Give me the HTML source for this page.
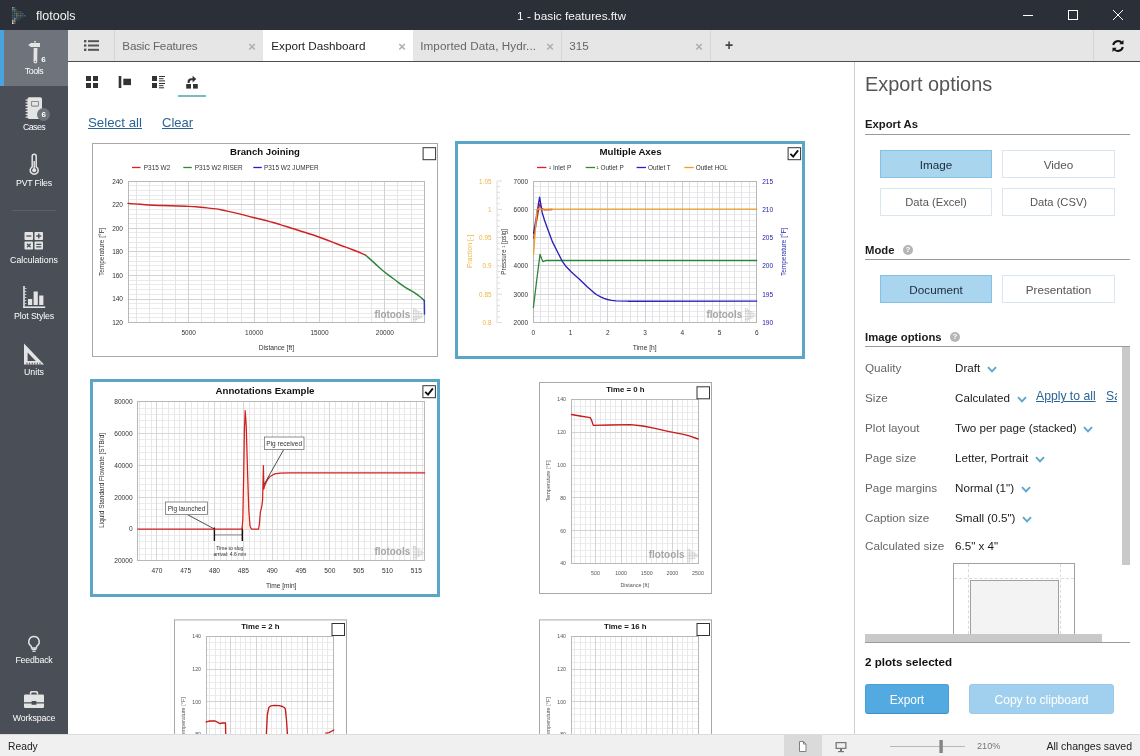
<!DOCTYPE html>
<html lang="en"><head><meta charset="utf-8"><title>flotools - basic features.ftw</title>
<style>
*{box-sizing:border-box;margin:0;padding:0}
html,body{width:1140px;height:756px;overflow:hidden;background:#fff}
body{font-family:"Liberation Sans",sans-serif;font-size:11.6px;color:#222;position:relative}
#app{position:absolute;left:0;top:0;width:1140px;height:756px;overflow:hidden;will-change:transform;background:#fff}
.abs{position:absolute}
#titlebar{position:absolute;left:0;top:0;width:1140px;height:30px;background:#2b3038;color:#f4f4f4}
#titlebar .app{position:absolute;left:36px;top:8px;font-size:12.5px;line-height:16px}
#titlebar .doc{position:absolute;left:0;width:1140px;text-align:center;top:8px;font-size:11.8px;line-height:16px;padding-left:3px}
#sidebar{position:absolute;left:0;top:30px;width:68px;height:704px;background:#494e57;color:#fff}
#sidebar .item{position:absolute;left:0;width:68px;text-align:center;font-size:8.8px;line-height:11px;color:#fff}
#sidebar .active{position:absolute;left:0;top:0;width:68px;height:56px;background:#6f737c;border-left:4px solid #4aa3df}
#tabbar{position:absolute;left:68px;top:30px;width:1072px;height:32px;background:#e6e6e6;border-bottom:1px solid #4d4d4d}
.tab{position:absolute;top:0;height:31px;width:149px;font-size:11.7px;line-height:32.2px;color:#666;padding-left:8px;border-right:1px solid #d6d6d6;white-space:nowrap}
.tab.on{background:#fff;color:#222;border-right:none}
.tab .x{position:absolute;right:7.2px;top:0.5px;font-size:13px;color:#adadad;font-weight:700;letter-spacing:0}
#status{position:absolute;left:0;top:734px;width:1140px;height:22px;background:#f0f0f0;border-top:1px solid #dcdcdc;font-size:10.3px;line-height:23px;color:#222}
#panel{position:absolute;left:854px;top:62px;width:286px;height:672px;border-left:1px solid #cfcfcf;background:#fff}
.h2{position:absolute;left:865px;font-weight:700;font-size:11.3px;color:#1a1a1a;line-height:14px;white-space:nowrap}
.hr{position:absolute;left:865px;width:265px;height:1px;background:#9a9a9a}
.btn{position:absolute;height:28px;line-height:27px;text-align:center;font-size:11.7px;border:1px solid #d9e6ef;color:#555;background:#fff}
.btn.sel{background:#a9d5ef;border-color:#85c1e4;color:#1a2a36}
.lab{position:absolute;left:865px;font-size:11.7px;color:#666;line-height:14px;white-space:nowrap}
.val{position:absolute;left:955px;font-size:11.65px;color:#1a1a1a;line-height:14px;white-space:nowrap}
.lnk{color:#2a6496;text-decoration:underline}
.help{position:absolute;width:10px;height:10px;border-radius:5px;background:#b5b5b5;color:#fff;font-size:8px;line-height:10px;text-align:center;font-weight:700}
.plot{position:absolute;background:#fff;border:1px solid #a6a6a6}
.plot.sel{border:3px solid #4b9fc9}
.cb{position:absolute;width:13px;height:13px;border:1px solid #333;background:#fff}
svg{position:absolute;left:0;top:0;overflow:visible}
svg text{font-family:"Liberation Sans",sans-serif}
</style></head>
<body>
<div id="app">
<div id="titlebar">
<svg width="30" height="30" viewBox="0 0 30 30"><rect x="12" y="7" width="1.5" height="1.5" fill="#46606a"/><rect x="14" y="7" width="1.5" height="1.5" fill="#44585c"/><rect x="12" y="9" width="1.5" height="1.5" fill="#44585c"/><rect x="14" y="9" width="1.5" height="1.5" fill="#46606a"/><rect x="16" y="9" width="1.5" height="1.5" fill="#3a4a52"/><rect x="12" y="11" width="1.5" height="1.5" fill="#44585c"/><rect x="14" y="11" width="1.5" height="1.5" fill="#4f6a70"/><rect x="16" y="11" width="1.5" height="1.5" fill="#44585c"/><rect x="18" y="11" width="1.5" height="1.5" fill="#3d5058"/><rect x="20" y="11" width="1.5" height="1.5" fill="#44585c"/><rect x="12" y="13" width="1.5" height="1.5" fill="#3d5058"/><rect x="14" y="13" width="1.5" height="1.5" fill="#4f6a70"/><rect x="16" y="13" width="1.5" height="1.5" fill="#3a4a52"/><rect x="18" y="13" width="1.5" height="1.5" fill="#44585c"/><rect x="20" y="13" width="1.5" height="1.5" fill="#46606a"/><rect x="22" y="13" width="1.5" height="1.5" fill="#46606a"/><rect x="12" y="15" width="1.5" height="1.5" fill="#4f6a70"/><rect x="14" y="15" width="1.5" height="1.5" fill="#44585c"/><rect x="16" y="15" width="1.5" height="1.5" fill="#44585c"/><rect x="18" y="15" width="1.5" height="1.5" fill="#4f6a70"/><rect x="20" y="15" width="1.5" height="1.5" fill="#4f6a70"/><rect x="22" y="15" width="1.5" height="1.5" fill="#46606a"/><rect x="24" y="15" width="1.5" height="1.5" fill="#46606a"/><rect x="12" y="17" width="1.5" height="1.5" fill="#46606a"/><rect x="14" y="17" width="1.5" height="1.5" fill="#44585c"/><rect x="16" y="17" width="1.5" height="1.5" fill="#4f6a70"/><rect x="18" y="17" width="1.5" height="1.5" fill="#3d5058"/><rect x="20" y="17" width="1.5" height="1.5" fill="#3d5058"/><rect x="12" y="19" width="1.5" height="1.5" fill="#46606a"/><rect x="14" y="19" width="1.5" height="1.5" fill="#44585c"/><rect x="16" y="19" width="1.5" height="1.5" fill="#3d5058"/><rect x="18" y="19" width="1.5" height="1.5" fill="#3a4a52"/><rect x="12" y="21" width="1.5" height="1.5" fill="#3d5058"/><rect x="14" y="21" width="1.5" height="1.5" fill="#3a4a52"/><rect x="12" y="22.6" width="1.5" height="1.5" fill="#4f6a70"/><rect x="12" y="7" width="1.5" height="1.5" fill="#8fa0a4"/><rect x="12" y="9" width="1.5" height="1.5" fill="#6f8088"/><rect x="14" y="9" width="1.5" height="1.5" fill="#5f7a80"/><rect x="16" y="13" width="1.5" height="1.5" fill="#8f7a50"/><rect x="16" y="15" width="1.5" height="1.5" fill="#7f7048"/><rect x="12" y="20.2" width="1.5" height="1.5" fill="#d8d8d8"/><rect x="14" y="20.2" width="1.5" height="1.5" fill="#9a9a9a"/><rect x="12" y="22.4" width="1.5" height="1.5" fill="#f0e8e0"/><rect x="14" y="22.4" width="1.5" height="1.5" fill="#806850"/><rect x="14" y="18" width="1.5" height="1.5" fill="#8a9a9a"/></svg>
<div class="app">flotools</div><div class="doc">1 - basic features.ftw</div>
<svg width="1140" height="30" viewBox="0 0 1140 30" fill="none" stroke="#fff" stroke-width="1"><path d="M1023 15.5h10"/><rect x="1068.5" y="10.5" width="9" height="9"/><path d="M1113 10l10 10M1123 10l-10 10"/></svg>
</div>
<div id="sidebar"><div class="active"></div>
<div class="item" style="top:35.7px;letter-spacing:-0.36px">Tools</div>
<div class="item" style="top:92.3px;letter-spacing:-0.56px">Cases</div>
<div class="item" style="top:148.0px;letter-spacing:-0.23px">PVT Files</div>
<div class="item" style="top:224.8px;letter-spacing:0px">Calculations</div>
<div class="item" style="top:281.0px;letter-spacing:-0.15px">Plot Styles</div>
<div class="item" style="top:336.8px;letter-spacing:0px">Units</div>
<div class="item" style="top:624.8px;letter-spacing:-0.19px">Feedback</div>
<div class="item" style="top:682.6px;letter-spacing:-0.15px">Workspace</div>
<div class="abs" style="left:41.2px;top:24.5px;font-size:8px;font-weight:700;color:#fff;line-height:10px">6</div>
<div class="abs" style="left:12px;top:180px;width:44px;height:1px;background:#5a5f68"></div>
<svg id="sideicons" width="68" height="704" viewBox="0 30 68 704"><g fill="#e4e4e4"><path d="M28.2 45l2.7-2.1h9.1v4.2h-9.1z"/><path d="M34.2 41.1h1.7v1.4h-1.7z"/><path d="M33.7 48h3.7l-.2 13.6q0 2-1.75 2t-1.95-2z"/></g><circle cx="35.3" cy="61.4" r="0.75" fill="#70747d"/><g><rect x="27.5" y="97.3" width="14.5" height="21.8" rx="1.8" fill="#e4e4e4"/><rect x="31.5" y="101.5" width="7" height="4.6" rx="0.6" fill="none" stroke="#8a8e96" stroke-width="1.1"/><rect x="25.5" y="99.4" width="3.2" height="1.3" rx="0.6" fill="#e4e4e4"/><rect x="25.5" y="102.25" width="3.2" height="1.3" rx="0.6" fill="#e4e4e4"/><rect x="25.5" y="105.10000000000001" width="3.2" height="1.3" rx="0.6" fill="#e4e4e4"/><rect x="25.5" y="107.95" width="3.2" height="1.3" rx="0.6" fill="#e4e4e4"/><rect x="25.5" y="110.80000000000001" width="3.2" height="1.3" rx="0.6" fill="#e4e4e4"/><rect x="25.5" y="113.65" width="3.2" height="1.3" rx="0.6" fill="#e4e4e4"/><rect x="25.5" y="116.5" width="3.2" height="1.3" rx="0.6" fill="#e4e4e4"/></g><path d="M32.2 156.2a2 2 0 0 1 4 0v10.6a4 4 0 1 1-4 0z" fill="none" stroke="#e4e4e4" stroke-width="1.5"/><circle cx="34.2" cy="170.3" r="2" fill="#e4e4e4"/><rect x="33.5" y="161" width="1.4" height="8" fill="#e4e4e4"/><g fill="#e4e4e4"><rect x="24.5" y="232" width="8.5" height="8" rx="0.8"/><rect x="34.5" y="232" width="8.5" height="8" rx="0.8"/><rect x="24.5" y="241.5" width="8.5" height="8" rx="0.8"/><rect x="34.5" y="241.5" width="8.5" height="8" rx="0.8"/></g><g stroke="#494e57" stroke-width="1.3" fill="none"><path d="M26.3 236h5"/><path d="M36.3 236h5M38.8 233.6v4.8"/><path d="M27 243.7l3.6 3.6M30.6 243.7l-3.6 3.6"/><path d="M36.3 244.4h5M36.3 246.8h5"/></g><g fill="#e4e4e4"><rect x="23.2" y="286" width="1.6" height="22"/><rect x="23.2" y="306.4" width="22" height="1.6"/><rect x="28" y="299" width="4.2" height="6"/><rect x="33.6" y="291.5" width="4.2" height="13.5"/><rect x="39.2" y="295.5" width="4.2" height="9.5"/><rect x="24.8" y="288" width="1.6" height="0.8"/><rect x="24.8" y="291" width="1.6" height="0.8"/><rect x="24.8" y="294" width="1.6" height="0.8"/><rect x="24.8" y="297" width="1.6" height="0.8"/><rect x="24.8" y="300" width="1.6" height="0.8"/><rect x="24.8" y="303" width="1.6" height="0.8"/></g><path d="M24 343.5L44 364.5H24z M27.6 352.5v8.6h8.2z" fill="#e4e4e4" fill-rule="evenodd"/><g fill="#494e57"><rect x="26.5" y="362.6" width="1" height="1.9"/><rect x="29.1" y="362.6" width="1" height="1.9"/><rect x="31.7" y="362.6" width="1" height="1.9"/><rect x="34.3" y="362.6" width="1" height="1.9"/><rect x="36.9" y="362.6" width="1" height="1.9"/><rect x="39.5" y="362.6" width="1" height="1.9"/></g><path d="M34 636.5a5.2 5.2 0 0 1 3.2 9.3q-.8.8-.8 2.2h-4.8q0-1.4-.8-2.2a5.2 5.2 0 0 1 3.2-9.3z" fill="none" stroke="#e4e4e4" stroke-width="1.5"/><rect x="31.6" y="648.6" width="4.8" height="1.4" fill="#e4e4e4"/><rect x="32.4" y="650.6" width="3.2" height="1.3" fill="#e4e4e4"/><g fill="#e4e4e4"><path d="M29.8 694.5v-1.8q0-1.8 1.8-1.8h4.8q1.8 0 1.8 1.8v1.8h-1.6v-1.4q0-.6-.6-.6h-4q-.6 0-.6.6v1.4z"/><path d="M24 695.8q0-1.3 1.3-1.3h17.4q1.3 0 1.3 1.3v6.4h-7.6v-1.2h-4.8v1.2H24z"/><path d="M24 703.4h7.6v1.4h4.8v-1.4H44v3.4q0 1.2-1.2 1.2H25.2q-1.2 0-1.2-1.2z"/></g></svg>
<div class="abs" style="left:37.3px;top:77.9px;width:13px;height:13px;border-radius:7px;background:#6e727a;font-size:8px;font-weight:700;color:#fff;line-height:13px;text-align:center">6</div>
</div>
<div id="tabbar">
<div class="tab" style="left:0;width:47px"></div>
<svg width="46" height="31" viewBox="0 0 46 31" fill="#555"><rect x="16" y="10" width="2.4" height="2.4"/><rect x="20" y="10.2" width="11" height="2"/><rect x="16" y="14.3" width="2.4" height="2.4"/><rect x="20" y="14.5" width="11" height="2"/><rect x="16" y="18.6" width="2.4" height="2.4"/><rect x="20" y="18.8" width="11" height="2"/></svg>
<div class="tab" style="left:47px;letter-spacing:-0.2px;padding-left:7.3px">Basic Features<span class="x">×</span></div>
<div class="tab on" style="left:195px;width:150px;padding-left:8.3px">Export Dashboard<span class="x">×</span></div>
<div class="tab" style="left:345px;padding-left:7.2px;letter-spacing:0.07px">Imported Data, Hydr...<span class="x">×</span></div>
<div class="tab" style="left:494px;padding-left:7.2px">315<span class="x">×</span></div>
<div class="abs" style="left:657px;top:0;line-height:31px;font-size:14px;font-weight:700;color:#444">+</div>
<div class="abs" style="left:1025px;top:0;width:1px;height:31px;background:#d6d6d6"></div>
<svg class="abs" style="left:1043px;top:9px" width="14" height="14" viewBox="0 0 14 14" fill="none" stroke="#111" stroke-width="2"><path d="M2.2 6A5 5 0 0 1 11 4"/><path d="M11.8 8A5 5 0 0 1 3 10"/><path d="M12.5 1v4.2h-4.2z" fill="#111" stroke="none"/><path d="M1.5 13v-4.2h4.2z" fill="#111" stroke="none"/></svg>
</div>
<svg width="1140" height="756" viewBox="0 0 1140 756" style="pointer-events:none" id="toolbar">
<g fill="#333"><rect x="86" y="76" width="5" height="5"/><rect x="93" y="76" width="5" height="5"/><rect x="86" y="83" width="5" height="5"/><rect x="93" y="83" width="5" height="5"/>
<rect x="118.7" y="76" width="2.6" height="12"/><rect x="123.3" y="78.7" width="7.7" height="6.4"/>
<rect x="152" y="76" width="5" height="5"/><rect x="152" y="83" width="5" height="5"/><rect x="159" y="76" width="6" height="1"/><rect x="159" y="78.2" width="4.5" height="1"/><rect x="159" y="80.4" width="6" height="1"/><rect x="159" y="83" width="6" height="1"/><rect x="159" y="85.2" width="4.5" height="1"/><rect x="159" y="87.3" width="5" height="1"/>
<rect x="186.2" y="84" width="4.8" height="4.6"/><rect x="193" y="84" width="4.8" height="4.6"/><path d="M187.6 83v-1.3q0-3.5 3.8-3.5h1.2v-2.5l3.7 3.4-3.7 3.4v-2.3h-1.1q-1.8 0-1.8 1.8v1z"/></g>
<rect x="178" y="95" width="28" height="2" fill="#78b9ca"/>
</svg>
<div class="abs lnk" style="left:88px;top:114.6px;font-size:13.3px;line-height:16px">Select all</div>
<div class="abs lnk" style="left:162px;top:114.6px;font-size:13px;line-height:16px">Clear</div>
<svg width="1140" height="734" viewBox="0 0 1140 734" style="overflow:hidden">
<rect x="92.5" y="143.5" width="345" height="213" fill="#fff" stroke="#a8a8a8" stroke-width="1"/>
<path d="M128 322.5H424.7M128 317.5H424.7M128 313.5H424.7M128 308.5H424.7M128 303.5H424.7M128 299.5H424.7M128 294.5H424.7M128 289.5H424.7M128 284.5H424.7M128 280.5H424.7M128 275.5H424.7M128 270.5H424.7M128 265.5H424.7M128 261.5H424.7M128 256.5H424.7M128 251.5H424.7M128 247.5H424.7M128 242.5H424.7M128 237.5H424.7M128 232.5H424.7M128 228.5H424.7M128 223.5H424.7M128 218.5H424.7M128 214.5H424.7M128 209.5H424.7M128 204.5H424.7M128 199.5H424.7M128 195.5H424.7M128 190.5H424.7M128 185.5H424.7M128 181.5H424.7" stroke="#eaeaea" stroke-width="1" fill="none"/><path d="M136.5 181V322.6M149.5 181V322.6M162.5 181V322.6M175.5 181V322.6M188.5 181V322.6M201.5 181V322.6M214.5 181V322.6M227.5 181V322.6M241.5 181V322.6M254.5 181V322.6M267.5 181V322.6M280.5 181V322.6M293.5 181V322.6M306.5 181V322.6M319.5 181V322.6M332.5 181V322.6M345.5 181V322.6M358.5 181V322.6M371.5 181V322.6M384.5 181V322.6M397.5 181V322.6M411.5 181V322.6M424.5 181V322.6" stroke="#e4e4e4" stroke-width="1" fill="none"/><path d="M188.5 181V322.6M254.5 181V322.6M319.5 181V322.6M384.5 181V322.6M128 322.5H424.7M128 299.5H424.7M128 275.5H424.7M128 251.5H424.7M128 228.5H424.7M128 204.5H424.7M128 181.5H424.7" stroke="#d2d2d2" stroke-width="1" fill="none"/><rect x="128.5" y="181.5" width="296" height="141" fill="none" stroke="#b8b8b8" stroke-width="1"/>
<text x="265" y="155.3" font-size="9.6" text-anchor="middle" fill="#111" font-weight="700">Branch Joining</text>
<path d="M132 167.5h8.5" stroke="#e02020" stroke-width="1.3"/>
<text x="143.8" y="169.7" font-size="6.45" text-anchor="start" fill="#333">P315 W2</text>
<path d="M183.3 167.5h8.5" stroke="#2e8b2e" stroke-width="1.3"/>
<text x="194.7" y="169.7" font-size="6.45" text-anchor="start" fill="#333">P315 W2 RISER</text>
<path d="M253.3 167.5h8.5" stroke="#2222c8" stroke-width="1.3"/>
<text x="264" y="169.7" font-size="6.45" text-anchor="start" fill="#333">P315 W2 JUMPER</text>
<text x="123" y="324.8" font-size="6.5" text-anchor="end" fill="#333">120</text>
<text x="123" y="301.32" font-size="6.5" text-anchor="end" fill="#333">140</text>
<text x="123" y="277.83" font-size="6.5" text-anchor="end" fill="#333">160</text>
<text x="123" y="254.35" font-size="6.5" text-anchor="end" fill="#333">180</text>
<text x="123" y="230.87" font-size="6.5" text-anchor="end" fill="#333">200</text>
<text x="123" y="207.38" font-size="6.5" text-anchor="end" fill="#333">220</text>
<text x="123" y="183.9" font-size="6.5" text-anchor="end" fill="#333">240</text>
<text x="188.7" y="335.2" font-size="6.5" text-anchor="middle" fill="#333">5000</text>
<text x="254.1" y="335.2" font-size="6.5" text-anchor="middle" fill="#333">10000</text>
<text x="319.5" y="335.2" font-size="6.5" text-anchor="middle" fill="#333">15000</text>
<text x="384.9" y="335.2" font-size="6.5" text-anchor="middle" fill="#333">20000</text>
<text x="276.4" y="350.4" font-size="6.7" text-anchor="middle" fill="#333">Distance [ft]</text>
<text x="104.2" y="251.8" font-size="6.5" text-anchor="middle" fill="#333" transform="rotate(-90 104.2 251.8)">Temperature [°F]</text>
<path d="M128 203.4C132 203.7 131.43 203.7 140 204.3C148.57 204.9 143.7 204.7 153.7 205.2C163.7 205.7 158.33 205.4 170 205.8C181.67 206.2 175.7 205.63 188.7 206.4C201.7 207.17 196.1 206.53 209 208.1C221.9 209.67 212.3 207.9 227.4 211.1C242.5 214.3 239.57 214.03 254.3 217.7C269.03 221.37 260.93 219.17 271.6 222.1C282.27 225.03 276.47 223.43 286.3 226.5C296.13 229.57 290.03 227.73 301.1 231.3C312.17 234.87 307.23 232.9 319.5 237.2C331.77 241.5 326.83 240 337.9 244.2C348.97 248.4 343.6 246.27 352.7 249.8C361.8 253.33 361.03 253.13 365.2 254.8" fill="none" stroke="#d02020" stroke-width="1.45" stroke-linejoin="round" stroke-linecap="round"/>
<path d="M365.6 255.3C368.4 257.73 368.5 257.7 374 262.6C379.5 267.5 375.7 264.7 382.1 270C388.5 275.3 385.83 272.97 393.2 278.5C400.57 284.03 397.43 282.07 404.2 286.6C410.97 291.13 408.57 288.97 413.5 292.1C418.43 295.23 415.33 293.17 419 296C422.67 298.83 422.67 299.07 424.5 300.6" fill="none" stroke="#2e8438" stroke-width="1.45" stroke-linejoin="round" stroke-linecap="round"/>
<path d="M424.3 300.5 L424.5 314" fill="none" stroke="#3535b8" stroke-width="1.45" stroke-linejoin="round" stroke-linecap="round"/>
<text x="374.4" y="317.6" font-size="11.2" font-weight="700" fill="#a6a6a6" textLength="35.8" lengthAdjust="spacingAndGlyphs">flotools</text><path d="M413 308.25h1.1v1.1h-1.1zM414.6 308.25h1.1v1.1h-1.1zM413 309.8h1.1v1.1h-1.1zM414.6 309.8h1.1v1.1h-1.1zM416.2 309.8h1.1v1.1h-1.1zM413 311.35h1.1v1.1h-1.1zM414.6 311.35h1.1v1.1h-1.1zM416.2 311.35h1.1v1.1h-1.1zM417.8 311.35h1.1v1.1h-1.1zM419.4 311.35h1.1v1.1h-1.1zM413 312.9h1.1v1.1h-1.1zM414.6 312.9h1.1v1.1h-1.1zM416.2 312.9h1.1v1.1h-1.1zM417.8 312.9h1.1v1.1h-1.1zM419.4 312.9h1.1v1.1h-1.1zM421 312.9h1.1v1.1h-1.1zM413 314.45h1.1v1.1h-1.1zM414.6 314.45h1.1v1.1h-1.1zM416.2 314.45h1.1v1.1h-1.1zM417.8 314.45h1.1v1.1h-1.1zM419.4 314.45h1.1v1.1h-1.1zM421 314.45h1.1v1.1h-1.1zM422.6 314.45h1.1v1.1h-1.1zM413 316h1.1v1.1h-1.1zM414.6 316h1.1v1.1h-1.1zM416.2 316h1.1v1.1h-1.1zM417.8 316h1.1v1.1h-1.1zM419.4 316h1.1v1.1h-1.1zM421 316h1.1v1.1h-1.1zM413 317.55h1.1v1.1h-1.1zM414.6 317.55h1.1v1.1h-1.1zM416.2 317.55h1.1v1.1h-1.1zM417.8 317.55h1.1v1.1h-1.1zM419.4 317.55h1.1v1.1h-1.1zM413 319.1h1.1v1.1h-1.1zM414.6 319.1h1.1v1.1h-1.1zM416.2 319.1h1.1v1.1h-1.1zM413 320.65h1.1v1.1h-1.1zM414.6 320.65h1.1v1.1h-1.1z" fill="#c6c6c6"/>
<rect x="423.1" y="147.7" width="12.5" height="12" fill="#fff" stroke="#333" stroke-width="1"/>
<rect x="456.5" y="142.5" width="347" height="215" fill="#fff" stroke="#5aa6c9" stroke-width="3"/>
<path d="M533.4 322.5H756.7M533.4 316.5H756.7M533.4 311.5H756.7M533.4 305.5H756.7M533.4 299.5H756.7M533.4 294.5H756.7M533.4 288.5H756.7M533.4 282.5H756.7M533.4 277.5H756.7M533.4 271.5H756.7M533.4 265.5H756.7M533.4 260.5H756.7M533.4 254.5H756.7M533.4 248.5H756.7M533.4 243.5H756.7M533.4 237.5H756.7M533.4 231.5H756.7M533.4 226.5H756.7M533.4 220.5H756.7M533.4 214.5H756.7M533.4 209.5H756.7M533.4 203.5H756.7M533.4 197.5H756.7M533.4 192.5H756.7M533.4 186.5H756.7M533.4 181.5H756.7" stroke="#eaeaed" stroke-width="1" fill="none"/><path d="M540.5 181V322.6M548.5 181V322.6M555.5 181V322.6M563.5 181V322.6M570.5 181V322.6M578.5 181V322.6M585.5 181V322.6M592.5 181V322.6M600.5 181V322.6M607.5 181V322.6M615.5 181V322.6M622.5 181V322.6M630.5 181V322.6M637.5 181V322.6M645.5 181V322.6M652.5 181V322.6M659.5 181V322.6M667.5 181V322.6M674.5 181V322.6M682.5 181V322.6M689.5 181V322.6M697.5 181V322.6M704.5 181V322.6M712.5 181V322.6M719.5 181V322.6M726.5 181V322.6M734.5 181V322.6M741.5 181V322.6M749.5 181V322.6" stroke="#e3e3e7" stroke-width="1" fill="none"/><path d="M570.5 181V322.6M607.5 181V322.6M645.5 181V322.6M682.5 181V322.6M719.5 181V322.6M533.4 322.5H756.7M533.4 294.5H756.7M533.4 265.5H756.7M533.4 237.5H756.7M533.4 209.5H756.7M533.4 181.5H756.7" stroke="#d0d0d5" stroke-width="1" fill="none"/><rect x="533.5" y="181.5" width="223" height="141" fill="none" stroke="#b8b8b8" stroke-width="1"/>
<text x="630.5" y="155.2" font-size="9.7" text-anchor="middle" fill="#111" font-weight="700">Multiple Axes</text>
<path d="M537 167.5h9.4" stroke="#e02020" stroke-width="1.3"/>
<text x="549" y="169.7" font-size="6.45" text-anchor="start" fill="#333">¹ Inlet P</text>
<path d="M585.7 167.5h9.4" stroke="#2e8b2e" stroke-width="1.3"/>
<text x="596.5" y="169.7" font-size="6.45" text-anchor="start" fill="#333">¹ Outlet P</text>
<path d="M636.6 167.5h9.4" stroke="#2222c8" stroke-width="1.3"/>
<text x="648" y="169.7" font-size="6.45" text-anchor="start" fill="#333">Outlet T</text>
<path d="M684.3 167.5h9.4" stroke="#f0a020" stroke-width="1.3"/>
<text x="695.7" y="169.7" font-size="6.45" text-anchor="start" fill="#333">Outlet HOL</text>
<path d="M497 181V322.6M497 181h5M497 186.66h3M497 192.33h3M497 197.99h3M497 203.66h3M497 209.32h5M497 214.98h3M497 220.65h3M497 226.31h3M497 231.98h3M497 237.64h5M497 243.3h3M497 248.97h3M497 254.63h3M497 260.3h3M497 265.96h5M497 271.62h3M497 277.29h3M497 282.95h3M497 288.62h3M497 294.28h5M497 299.94h3M497 305.61h3M497 311.27h3M497 316.94h3M497 322.6h5" stroke="#dcdcdc" stroke-width="1" fill="none"/>
<text x="491.5" y="183.9" font-size="6.4" text-anchor="end" fill="#efb345">1.05</text>
<text x="491.5" y="212.08" font-size="6.4" text-anchor="end" fill="#efb345">1</text>
<text x="491.5" y="240.26" font-size="6.4" text-anchor="end" fill="#efb345">0.95</text>
<text x="491.5" y="268.44" font-size="6.4" text-anchor="end" fill="#efb345">0.9</text>
<text x="491.5" y="296.62" font-size="6.4" text-anchor="end" fill="#efb345">0.85</text>
<text x="491.5" y="324.8" font-size="6.4" text-anchor="end" fill="#efb345">0.8</text>
<text x="528" y="183.9" font-size="6.5" text-anchor="end" fill="#333">7000</text>
<text x="528" y="212.08" font-size="6.5" text-anchor="end" fill="#333">6000</text>
<text x="528" y="240.26" font-size="6.5" text-anchor="end" fill="#333">5000</text>
<text x="528" y="268.44" font-size="6.5" text-anchor="end" fill="#333">4000</text>
<text x="528" y="296.62" font-size="6.5" text-anchor="end" fill="#333">3000</text>
<text x="528" y="324.8" font-size="6.5" text-anchor="end" fill="#333">2000</text>
<text x="762.2" y="183.9" font-size="6.5" text-anchor="start" fill="#2222a8">215</text>
<text x="762.2" y="212.08" font-size="6.5" text-anchor="start" fill="#2222a8">210</text>
<text x="762.2" y="240.26" font-size="6.5" text-anchor="start" fill="#2222a8">205</text>
<text x="762.2" y="268.44" font-size="6.5" text-anchor="start" fill="#2222a8">200</text>
<text x="762.2" y="296.62" font-size="6.5" text-anchor="start" fill="#2222a8">195</text>
<text x="762.2" y="324.8" font-size="6.5" text-anchor="start" fill="#2222a8">190</text>
<text x="533.4" y="335.2" font-size="6.5" text-anchor="middle" fill="#333">0</text>
<text x="570.62" y="335.2" font-size="6.5" text-anchor="middle" fill="#333">1</text>
<text x="607.84" y="335.2" font-size="6.5" text-anchor="middle" fill="#333">2</text>
<text x="645.06" y="335.2" font-size="6.5" text-anchor="middle" fill="#333">3</text>
<text x="682.28" y="335.2" font-size="6.5" text-anchor="middle" fill="#333">4</text>
<text x="719.5" y="335.2" font-size="6.5" text-anchor="middle" fill="#333">5</text>
<text x="756.72" y="335.2" font-size="6.5" text-anchor="middle" fill="#333">6</text>
<text x="644.7" y="350.4" font-size="6.7" text-anchor="middle" fill="#333">Time [h]</text>
<text x="471.7" y="251.4" font-size="6.9" text-anchor="middle" fill="#efb345" transform="rotate(-90 471.7 251.4)">Fraction [-]</text>
<text x="506.2" y="251.8" font-size="6.3" text-anchor="middle" fill="#333" transform="rotate(-90 506.2 251.8)">Pressure ¹ [psig]</text>
<text x="786" y="251.8" font-size="6.5" text-anchor="middle" fill="#2222a8" transform="rotate(-90 786 251.8)">Temperature [°F]</text>
<path d="M533.4 307.5 L536.5 282 L540 254.3 L541.5 258.5 L543 261.7 L544.8 260.9 L546.5 260.5 L756.7 260.5" fill="none" stroke="#2e8438" stroke-width="1.3" stroke-linejoin="round" stroke-linecap="round"/>
<path d="M533.6 238 L536.5 222 L539.6 204 L541.5 208 L544 209.8 L552 209.5" fill="none" stroke="#d42020" stroke-width="1.3" stroke-linejoin="round" stroke-linecap="round"/>
<path d="M533.6 233.3 L536.5 216 L539.6 197.2 L540.8 204 L542.2 212.7 L544.6 220.5 L547.3 228.1 L552.5 241.9 L557.7 252.2 L562 260.8 L566.3 266.8 L571.4 272 L575.5 275.8 L580 279.7 L586.9 286.6 L593.8 292.6 L597.2 295 L600.6 296.9 L604 298.4 L607.5 299.5 L611.5 300.4 L616.1 300.9 L628.1 301.2 L756.7 301.1" fill="none" stroke="#2a22b4" stroke-width="1.35" stroke-linejoin="round" stroke-linecap="round"/>
<path d="M533.6 254 L535.2 232 L537 209.2 L756.7 209.2" fill="none" stroke="#eca02a" stroke-width="1.3" stroke-linejoin="round" stroke-linecap="round"/>
<text x="706.4" y="317.6" font-size="11.2" font-weight="700" fill="#a6a6a6" textLength="35.8" lengthAdjust="spacingAndGlyphs">flotools</text><path d="M745 308.25h1.1v1.1h-1.1zM746.6 308.25h1.1v1.1h-1.1zM745 309.8h1.1v1.1h-1.1zM746.6 309.8h1.1v1.1h-1.1zM748.2 309.8h1.1v1.1h-1.1zM745 311.35h1.1v1.1h-1.1zM746.6 311.35h1.1v1.1h-1.1zM748.2 311.35h1.1v1.1h-1.1zM749.8 311.35h1.1v1.1h-1.1zM751.4 311.35h1.1v1.1h-1.1zM745 312.9h1.1v1.1h-1.1zM746.6 312.9h1.1v1.1h-1.1zM748.2 312.9h1.1v1.1h-1.1zM749.8 312.9h1.1v1.1h-1.1zM751.4 312.9h1.1v1.1h-1.1zM753 312.9h1.1v1.1h-1.1zM745 314.45h1.1v1.1h-1.1zM746.6 314.45h1.1v1.1h-1.1zM748.2 314.45h1.1v1.1h-1.1zM749.8 314.45h1.1v1.1h-1.1zM751.4 314.45h1.1v1.1h-1.1zM753 314.45h1.1v1.1h-1.1zM754.6 314.45h1.1v1.1h-1.1zM745 316h1.1v1.1h-1.1zM746.6 316h1.1v1.1h-1.1zM748.2 316h1.1v1.1h-1.1zM749.8 316h1.1v1.1h-1.1zM751.4 316h1.1v1.1h-1.1zM753 316h1.1v1.1h-1.1zM745 317.55h1.1v1.1h-1.1zM746.6 317.55h1.1v1.1h-1.1zM748.2 317.55h1.1v1.1h-1.1zM749.8 317.55h1.1v1.1h-1.1zM751.4 317.55h1.1v1.1h-1.1zM745 319.1h1.1v1.1h-1.1zM746.6 319.1h1.1v1.1h-1.1zM748.2 319.1h1.1v1.1h-1.1zM745 320.65h1.1v1.1h-1.1zM746.6 320.65h1.1v1.1h-1.1z" fill="#c6c6c6"/>
<rect x="788.1" y="147.7" width="12.5" height="12" fill="#fff" stroke="#333" stroke-width="1"/><path d="M790.4 153.8l2.8 2.8 4.9-6.2" fill="none" stroke="#111" stroke-width="1.9"/>
<rect x="91.5" y="380.5" width="347" height="215" fill="#fff" stroke="#5aa6c9" stroke-width="3"/>
<path d="M137.8 554.5H424.7M137.8 548.5H424.7M137.8 541.5H424.7M137.8 535.5H424.7M137.8 529.5H424.7M137.8 522.5H424.7M137.8 516.5H424.7M137.8 509.5H424.7M137.8 503.5H424.7M137.8 497.5H424.7M137.8 490.5H424.7M137.8 484.5H424.7M137.8 478.5H424.7M137.8 471.5H424.7M137.8 465.5H424.7M137.8 459.5H424.7M137.8 452.5H424.7M137.8 446.5H424.7M137.8 439.5H424.7M137.8 433.5H424.7M137.8 427.5H424.7M137.8 420.5H424.7M137.8 414.5H424.7M137.8 408.5H424.7M137.8 401.5H424.7" stroke="#ececec" stroke-width="1" fill="none"/><path d="M139.5 401.5V560.5M145.5 401.5V560.5M151.5 401.5V560.5M156.5 401.5V560.5M162.5 401.5V560.5M168.5 401.5V560.5M174.5 401.5V560.5M179.5 401.5V560.5M185.5 401.5V560.5M191.5 401.5V560.5M197.5 401.5V560.5M203.5 401.5V560.5M208.5 401.5V560.5M214.5 401.5V560.5M220.5 401.5V560.5M226.5 401.5V560.5M231.5 401.5V560.5M237.5 401.5V560.5M243.5 401.5V560.5M249.5 401.5V560.5M254.5 401.5V560.5M260.5 401.5V560.5M266.5 401.5V560.5M272.5 401.5V560.5M277.5 401.5V560.5M283.5 401.5V560.5M289.5 401.5V560.5M295.5 401.5V560.5M301.5 401.5V560.5M306.5 401.5V560.5M312.5 401.5V560.5M318.5 401.5V560.5M324.5 401.5V560.5M329.5 401.5V560.5M335.5 401.5V560.5M341.5 401.5V560.5M347.5 401.5V560.5M352.5 401.5V560.5M358.5 401.5V560.5M364.5 401.5V560.5M370.5 401.5V560.5M375.5 401.5V560.5M381.5 401.5V560.5M387.5 401.5V560.5M393.5 401.5V560.5M399.5 401.5V560.5M404.5 401.5V560.5M410.5 401.5V560.5M416.5 401.5V560.5M422.5 401.5V560.5" stroke="#e8e8e8" stroke-width="1" fill="none"/><path d="M156.5 401.5V560.5M185.5 401.5V560.5M214.5 401.5V560.5M243.5 401.5V560.5M272.5 401.5V560.5M301.5 401.5V560.5M329.5 401.5V560.5M358.5 401.5V560.5M387.5 401.5V560.5M416.5 401.5V560.5M137.8 529.5H424.7M137.8 497.5H424.7M137.8 465.5H424.7M137.8 433.5H424.7M137.8 401.5H424.7" stroke="#d8d8d8" stroke-width="1" fill="none"/><rect x="137.5" y="401.5" width="287" height="159" fill="none" stroke="#b8b8b8" stroke-width="1"/>
<text x="265" y="393.7" font-size="9.7" text-anchor="middle" fill="#111" font-weight="700">Annotations Example</text>
<text x="132.6" y="563.1" font-size="6.6" text-anchor="end" fill="#333">20000</text>
<text x="132.6" y="531.3" font-size="6.6" text-anchor="end" fill="#333">0</text>
<text x="132.6" y="499.5" font-size="6.6" text-anchor="end" fill="#333">20000</text>
<text x="132.6" y="467.7" font-size="6.6" text-anchor="end" fill="#333">40000</text>
<text x="132.6" y="435.9" font-size="6.6" text-anchor="end" fill="#333">60000</text>
<text x="132.6" y="404.1" font-size="6.6" text-anchor="end" fill="#333">80000</text>
<text x="156.9" y="573.2" font-size="6.6" text-anchor="middle" fill="#333">470</text>
<text x="185.72" y="573.2" font-size="6.6" text-anchor="middle" fill="#333">475</text>
<text x="214.55" y="573.2" font-size="6.6" text-anchor="middle" fill="#333">480</text>
<text x="243.38" y="573.2" font-size="6.6" text-anchor="middle" fill="#333">485</text>
<text x="272.2" y="573.2" font-size="6.6" text-anchor="middle" fill="#333">490</text>
<text x="301.02" y="573.2" font-size="6.6" text-anchor="middle" fill="#333">495</text>
<text x="329.85" y="573.2" font-size="6.6" text-anchor="middle" fill="#333">500</text>
<text x="358.67" y="573.2" font-size="6.6" text-anchor="middle" fill="#333">505</text>
<text x="387.5" y="573.2" font-size="6.6" text-anchor="middle" fill="#333">510</text>
<text x="416.33" y="573.2" font-size="6.6" text-anchor="middle" fill="#333">515</text>
<text x="281.2" y="587.5" font-size="6.6" text-anchor="middle" fill="#333">Time [min]</text>
<text x="104.2" y="480.4" font-size="6.45" text-anchor="middle" fill="#333" transform="rotate(-90 104.2 480.4)">Liquid Standard Flowrate [STB/d]</text>
<path d="M214.4 534.9H242.3" stroke="#888" stroke-width="1"/>
<path d="M214.4 527.4V541M242.3 527.4V541" stroke="#111" stroke-width="1.4"/>
<text x="229.8" y="549.6" font-size="5.0" text-anchor="middle" fill="#333">Time to slug</text>
<text x="229.8" y="555.8" font-size="5.0" text-anchor="middle" fill="#333">arrival: 4.6 min</text>
<path d="M242.6 529L243.6 480 244.4 430 245.2 410.6 246.2 425 247.5 470 248.8 510 250 526 251.4 529z" fill="#fdeee5"/>
<path d="M137.8 529 L242 529 L242.8 520 L243.6 480 L244.4 430 L245.2 410.6 L246.2 425 L247.5 470 L248.8 510 L250 526 L251.4 529 L258.6 529 L259.4 524 L260.4 512 L261.8 506.3 L262.6 500 L263.4 465.7 L263.9 489 L264.4 486.5 L266 482.5 L268 479 L270.5 476.2 L274.7 473.9 L280 473.1 L290 472.9 L424.7 472.9" fill="none" stroke="#d22020" stroke-width="1.25" stroke-linejoin="round" stroke-linecap="round"/>
<path d="M187 514.4L214.4 529M283.7 449.6L264.3 484" stroke="#222" stroke-width="0.8" fill="none"/>
<rect x="165.5" y="502" width="42" height="12.6" fill="#fff" stroke="#777" stroke-width="0.8"/>
<text x="186.5" y="510.8" font-size="6.5" text-anchor="middle" fill="#333">Pig launched</text>
<rect x="264.5" y="437" width="39.5" height="12.5" fill="#fff" stroke="#777" stroke-width="0.8"/>
<text x="284.2" y="445.8" font-size="6.5" text-anchor="middle" fill="#333">Pig received</text>
<text x="374.4" y="555.4" font-size="11.2" font-weight="700" fill="#a6a6a6" textLength="35.8" lengthAdjust="spacingAndGlyphs">flotools</text><path d="M413 546.05h1.1v1.1h-1.1zM414.6 546.05h1.1v1.1h-1.1zM413 547.6h1.1v1.1h-1.1zM414.6 547.6h1.1v1.1h-1.1zM416.2 547.6h1.1v1.1h-1.1zM413 549.15h1.1v1.1h-1.1zM414.6 549.15h1.1v1.1h-1.1zM416.2 549.15h1.1v1.1h-1.1zM417.8 549.15h1.1v1.1h-1.1zM419.4 549.15h1.1v1.1h-1.1zM413 550.7h1.1v1.1h-1.1zM414.6 550.7h1.1v1.1h-1.1zM416.2 550.7h1.1v1.1h-1.1zM417.8 550.7h1.1v1.1h-1.1zM419.4 550.7h1.1v1.1h-1.1zM421 550.7h1.1v1.1h-1.1zM413 552.25h1.1v1.1h-1.1zM414.6 552.25h1.1v1.1h-1.1zM416.2 552.25h1.1v1.1h-1.1zM417.8 552.25h1.1v1.1h-1.1zM419.4 552.25h1.1v1.1h-1.1zM421 552.25h1.1v1.1h-1.1zM422.6 552.25h1.1v1.1h-1.1zM413 553.8h1.1v1.1h-1.1zM414.6 553.8h1.1v1.1h-1.1zM416.2 553.8h1.1v1.1h-1.1zM417.8 553.8h1.1v1.1h-1.1zM419.4 553.8h1.1v1.1h-1.1zM421 553.8h1.1v1.1h-1.1zM413 555.35h1.1v1.1h-1.1zM414.6 555.35h1.1v1.1h-1.1zM416.2 555.35h1.1v1.1h-1.1zM417.8 555.35h1.1v1.1h-1.1zM419.4 555.35h1.1v1.1h-1.1zM413 556.9h1.1v1.1h-1.1zM414.6 556.9h1.1v1.1h-1.1zM416.2 556.9h1.1v1.1h-1.1zM413 558.45h1.1v1.1h-1.1zM414.6 558.45h1.1v1.1h-1.1z" fill="#c6c6c6"/>
<rect x="422.9" y="385.7" width="12.5" height="12" fill="#fff" stroke="#333" stroke-width="1"/><path d="M425.2 391.8l2.8 2.8 4.9-6.2" fill="none" stroke="#111" stroke-width="1.9"/>
<rect x="539.5" y="382.5" width="172" height="211" fill="#fff" stroke="#a8a8a8" stroke-width="1"/><path d="M571.4 563.5H698.1M571.4 556.5H698.1M571.4 550.5H698.1M571.4 543.5H698.1M571.4 537.5H698.1M571.4 530.5H698.1M571.4 524.5H698.1M571.4 517.5H698.1M571.4 511.5H698.1M571.4 504.5H698.1M571.4 497.5H698.1M571.4 491.5H698.1M571.4 484.5H698.1M571.4 478.5H698.1M571.4 471.5H698.1M571.4 465.5H698.1M571.4 458.5H698.1M571.4 451.5H698.1M571.4 445.5H698.1M571.4 438.5H698.1M571.4 432.5H698.1M571.4 425.5H698.1M571.4 419.5H698.1M571.4 412.5H698.1M571.4 406.5H698.1M571.4 399.5H698.1" stroke="#ececec" stroke-width="1" fill="none"/><path d="M574.5 399.5V563.5M580.5 399.5V563.5M585.5 399.5V563.5M590.5 399.5V563.5M595.5 399.5V563.5M600.5 399.5V563.5M605.5 399.5V563.5M610.5 399.5V563.5M615.5 399.5V563.5M621.5 399.5V563.5M626.5 399.5V563.5M631.5 399.5V563.5M636.5 399.5V563.5M641.5 399.5V563.5M646.5 399.5V563.5M651.5 399.5V563.5M656.5 399.5V563.5M662.5 399.5V563.5M667.5 399.5V563.5M672.5 399.5V563.5M677.5 399.5V563.5M682.5 399.5V563.5M687.5 399.5V563.5M692.5 399.5V563.5" stroke="#e9e9e9" stroke-width="1" fill="none"/><path d="M595.5 399.5V563.5M621.5 399.5V563.5M646.5 399.5V563.5M672.5 399.5V563.5M698.5 399.5V563.5M571.4 563.5H698.1M571.4 530.5H698.1M571.4 497.5H698.1M571.4 465.5H698.1M571.4 432.5H698.1M571.4 399.5H698.1" stroke="#d4d4d4" stroke-width="1" fill="none"/><rect x="571.5" y="399.5" width="127" height="164" fill="none" stroke="#b8b8b8" stroke-width="1"/><text x="625.3" y="392.4" font-size="7.8" text-anchor="middle" fill="#111" font-weight="700">Time = 0 h</text><text x="566" y="565.3" font-size="5.2" text-anchor="end" fill="#555">40</text><text x="566" y="532.5" font-size="5.2" text-anchor="end" fill="#555">60</text><text x="566" y="499.7" font-size="5.2" text-anchor="end" fill="#555">80</text><text x="566" y="466.9" font-size="5.2" text-anchor="end" fill="#555">100</text><text x="566" y="434.1" font-size="5.2" text-anchor="end" fill="#555">120</text><text x="566" y="401.3" font-size="5.2" text-anchor="end" fill="#555">140</text><text x="595.44" y="574.9" font-size="5.3" text-anchor="middle" fill="#555">500</text><text x="621.08" y="574.9" font-size="5.3" text-anchor="middle" fill="#555">1000</text><text x="646.72" y="574.9" font-size="5.3" text-anchor="middle" fill="#555">1500</text><text x="672.36" y="574.9" font-size="5.3" text-anchor="middle" fill="#555">2000</text><text x="698" y="574.9" font-size="5.3" text-anchor="middle" fill="#555">2500</text><text x="634.7" y="587.4" font-size="5.4" text-anchor="middle" fill="#555">Distance [ft]</text><text x="550" y="481" font-size="5.5" text-anchor="middle" fill="#555" transform="rotate(-90 550 481)">Temperature [°F]</text><path d="M571.5 414.5 L580 416 L590.2 417.6 L591.5 420 L593.3 425.4 L610 425 L630.6 424.7 L643 426 L655 428.4 L668 431.3 L683.5 434.4 L690 436.2 L698.1 439" fill="none" stroke="#c81a1a" stroke-width="1.35" stroke-linejoin="round" stroke-linecap="round"/><text x="648.7" y="558" font-size="11.2" font-weight="700" fill="#a6a6a6" textLength="35.8" lengthAdjust="spacingAndGlyphs">flotools</text><path d="M687.3 548.65h1.1v1.1h-1.1zM688.9 548.65h1.1v1.1h-1.1zM687.3 550.2h1.1v1.1h-1.1zM688.9 550.2h1.1v1.1h-1.1zM690.5 550.2h1.1v1.1h-1.1zM687.3 551.75h1.1v1.1h-1.1zM688.9 551.75h1.1v1.1h-1.1zM690.5 551.75h1.1v1.1h-1.1zM692.1 551.75h1.1v1.1h-1.1zM693.7 551.75h1.1v1.1h-1.1zM687.3 553.3h1.1v1.1h-1.1zM688.9 553.3h1.1v1.1h-1.1zM690.5 553.3h1.1v1.1h-1.1zM692.1 553.3h1.1v1.1h-1.1zM693.7 553.3h1.1v1.1h-1.1zM695.3 553.3h1.1v1.1h-1.1zM687.3 554.85h1.1v1.1h-1.1zM688.9 554.85h1.1v1.1h-1.1zM690.5 554.85h1.1v1.1h-1.1zM692.1 554.85h1.1v1.1h-1.1zM693.7 554.85h1.1v1.1h-1.1zM695.3 554.85h1.1v1.1h-1.1zM696.9 554.85h1.1v1.1h-1.1zM687.3 556.4h1.1v1.1h-1.1zM688.9 556.4h1.1v1.1h-1.1zM690.5 556.4h1.1v1.1h-1.1zM692.1 556.4h1.1v1.1h-1.1zM693.7 556.4h1.1v1.1h-1.1zM695.3 556.4h1.1v1.1h-1.1zM687.3 557.95h1.1v1.1h-1.1zM688.9 557.95h1.1v1.1h-1.1zM690.5 557.95h1.1v1.1h-1.1zM692.1 557.95h1.1v1.1h-1.1zM693.7 557.95h1.1v1.1h-1.1zM687.3 559.5h1.1v1.1h-1.1zM688.9 559.5h1.1v1.1h-1.1zM690.5 559.5h1.1v1.1h-1.1zM687.3 561.05h1.1v1.1h-1.1zM688.9 561.05h1.1v1.1h-1.1z" fill="#c6c6c6"/><rect x="697" y="386.8" width="12.5" height="12" fill="#fff" stroke="#333" stroke-width="1"/>
<rect x="174.5" y="619.9" width="172" height="211.0" fill="#fff" stroke="#a8a8a8" stroke-width="1"/><path d="M206.4 800.5H333.1M206.4 793.5H333.1M206.4 787.5H333.1M206.4 780.5H333.1M206.4 773.5H333.1M206.4 767.5H333.1M206.4 760.5H333.1M206.4 754.5H333.1M206.4 747.5H333.1M206.4 741.5H333.1M206.4 734.5H333.1M206.4 728.5H333.1M206.4 721.5H333.1M206.4 714.5H333.1M206.4 708.5H333.1M206.4 701.5H333.1M206.4 695.5H333.1M206.4 688.5H333.1M206.4 682.5H333.1M206.4 675.5H333.1M206.4 669.5H333.1M206.4 662.5H333.1M206.4 655.5H333.1M206.4 649.5H333.1M206.4 642.5H333.1M206.4 636.5H333.1" stroke="#ececec" stroke-width="1" fill="none"/><path d="M209.5 636.2V800.2M215.5 636.2V800.2M220.5 636.2V800.2M225.5 636.2V800.2M230.5 636.2V800.2M235.5 636.2V800.2M240.5 636.2V800.2M245.5 636.2V800.2M250.5 636.2V800.2M256.5 636.2V800.2M261.5 636.2V800.2M266.5 636.2V800.2M271.5 636.2V800.2M276.5 636.2V800.2M281.5 636.2V800.2M286.5 636.2V800.2M291.5 636.2V800.2M297.5 636.2V800.2M302.5 636.2V800.2M307.5 636.2V800.2M312.5 636.2V800.2M317.5 636.2V800.2M322.5 636.2V800.2M327.5 636.2V800.2" stroke="#e9e9e9" stroke-width="1" fill="none"/><path d="M230.5 636.2V800.2M256.5 636.2V800.2M281.5 636.2V800.2M307.5 636.2V800.2M333.5 636.2V800.2M206.4 800.5H333.1M206.4 767.5H333.1M206.4 734.5H333.1M206.4 701.5H333.1M206.4 669.5H333.1M206.4 636.5H333.1" stroke="#d4d4d4" stroke-width="1" fill="none"/><rect x="206.5" y="636.5" width="127" height="164" fill="none" stroke="#b8b8b8" stroke-width="1"/><text x="260.3" y="629.1" font-size="7.8" text-anchor="middle" fill="#111" font-weight="700">Time = 2 h</text><text x="201" y="802" font-size="5.2" text-anchor="end" fill="#555">40</text><text x="201" y="769.2" font-size="5.2" text-anchor="end" fill="#555">60</text><text x="201" y="736.4" font-size="5.2" text-anchor="end" fill="#555">80</text><text x="201" y="703.6" font-size="5.2" text-anchor="end" fill="#555">100</text><text x="201" y="670.8" font-size="5.2" text-anchor="end" fill="#555">120</text><text x="201" y="638" font-size="5.2" text-anchor="end" fill="#555">140</text><text x="230.44" y="811.6" font-size="5.3" text-anchor="middle" fill="#555">500</text><text x="256.08" y="811.6" font-size="5.3" text-anchor="middle" fill="#555">1000</text><text x="281.72" y="811.6" font-size="5.3" text-anchor="middle" fill="#555">1500</text><text x="307.36" y="811.6" font-size="5.3" text-anchor="middle" fill="#555">2000</text><text x="333" y="811.6" font-size="5.3" text-anchor="middle" fill="#555">2500</text><text x="269.7" y="824.1" font-size="5.4" text-anchor="middle" fill="#555">Distance [ft]</text><text x="185" y="717.7" font-size="5.5" text-anchor="middle" fill="#555" transform="rotate(-90 185 717.7)">Temperature [°F]</text><path d="M206.1 721.8 L210 721 L215.3 721 L219.8 723.6 L222 723 L225.5 722.9 L225.8 740" fill="none" stroke="#c81a1a" stroke-width="1.35" stroke-linejoin="round" stroke-linecap="round"/><path d="M266.1 740 L267.3 715 L268.8 707.6 L271 705.8 L274.5 705.3 L279 705.6 L282.5 706.5 L284.3 707.5 L285.3 708.8 L286.5 720 L287.8 740" fill="none" stroke="#c81a1a" stroke-width="1.35" stroke-linejoin="round" stroke-linecap="round"/><path d="M325.9 733.2 L329 732.6 L333.8 730" fill="none" stroke="#c81a1a" stroke-width="1.35" stroke-linejoin="round" stroke-linecap="round"/><text x="283.7" y="794.7" font-size="11.2" font-weight="700" fill="#a6a6a6" textLength="35.8" lengthAdjust="spacingAndGlyphs">flotools</text><path d="M322.3 785.35h1.1v1.1h-1.1zM323.9 785.35h1.1v1.1h-1.1zM322.3 786.9h1.1v1.1h-1.1zM323.9 786.9h1.1v1.1h-1.1zM325.5 786.9h1.1v1.1h-1.1zM322.3 788.45h1.1v1.1h-1.1zM323.9 788.45h1.1v1.1h-1.1zM325.5 788.45h1.1v1.1h-1.1zM327.1 788.45h1.1v1.1h-1.1zM328.7 788.45h1.1v1.1h-1.1zM322.3 790h1.1v1.1h-1.1zM323.9 790h1.1v1.1h-1.1zM325.5 790h1.1v1.1h-1.1zM327.1 790h1.1v1.1h-1.1zM328.7 790h1.1v1.1h-1.1zM330.3 790h1.1v1.1h-1.1zM322.3 791.55h1.1v1.1h-1.1zM323.9 791.55h1.1v1.1h-1.1zM325.5 791.55h1.1v1.1h-1.1zM327.1 791.55h1.1v1.1h-1.1zM328.7 791.55h1.1v1.1h-1.1zM330.3 791.55h1.1v1.1h-1.1zM331.9 791.55h1.1v1.1h-1.1zM322.3 793.1h1.1v1.1h-1.1zM323.9 793.1h1.1v1.1h-1.1zM325.5 793.1h1.1v1.1h-1.1zM327.1 793.1h1.1v1.1h-1.1zM328.7 793.1h1.1v1.1h-1.1zM330.3 793.1h1.1v1.1h-1.1zM322.3 794.65h1.1v1.1h-1.1zM323.9 794.65h1.1v1.1h-1.1zM325.5 794.65h1.1v1.1h-1.1zM327.1 794.65h1.1v1.1h-1.1zM328.7 794.65h1.1v1.1h-1.1zM322.3 796.2h1.1v1.1h-1.1zM323.9 796.2h1.1v1.1h-1.1zM325.5 796.2h1.1v1.1h-1.1zM322.3 797.75h1.1v1.1h-1.1zM323.9 797.75h1.1v1.1h-1.1z" fill="#c6c6c6"/><rect x="332" y="623.5" width="12.5" height="12" fill="#fff" stroke="#333" stroke-width="1"/>
<rect x="539.5" y="619.9" width="172" height="211.0" fill="#fff" stroke="#a8a8a8" stroke-width="1"/><path d="M571.4 800.5H698.1M571.4 793.5H698.1M571.4 787.5H698.1M571.4 780.5H698.1M571.4 773.5H698.1M571.4 767.5H698.1M571.4 760.5H698.1M571.4 754.5H698.1M571.4 747.5H698.1M571.4 741.5H698.1M571.4 734.5H698.1M571.4 728.5H698.1M571.4 721.5H698.1M571.4 714.5H698.1M571.4 708.5H698.1M571.4 701.5H698.1M571.4 695.5H698.1M571.4 688.5H698.1M571.4 682.5H698.1M571.4 675.5H698.1M571.4 669.5H698.1M571.4 662.5H698.1M571.4 655.5H698.1M571.4 649.5H698.1M571.4 642.5H698.1M571.4 636.5H698.1" stroke="#ececec" stroke-width="1" fill="none"/><path d="M574.5 636.2V800.2M580.5 636.2V800.2M585.5 636.2V800.2M590.5 636.2V800.2M595.5 636.2V800.2M600.5 636.2V800.2M605.5 636.2V800.2M610.5 636.2V800.2M615.5 636.2V800.2M621.5 636.2V800.2M626.5 636.2V800.2M631.5 636.2V800.2M636.5 636.2V800.2M641.5 636.2V800.2M646.5 636.2V800.2M651.5 636.2V800.2M656.5 636.2V800.2M662.5 636.2V800.2M667.5 636.2V800.2M672.5 636.2V800.2M677.5 636.2V800.2M682.5 636.2V800.2M687.5 636.2V800.2M692.5 636.2V800.2" stroke="#e9e9e9" stroke-width="1" fill="none"/><path d="M595.5 636.2V800.2M621.5 636.2V800.2M646.5 636.2V800.2M672.5 636.2V800.2M698.5 636.2V800.2M571.4 800.5H698.1M571.4 767.5H698.1M571.4 734.5H698.1M571.4 701.5H698.1M571.4 669.5H698.1M571.4 636.5H698.1" stroke="#d4d4d4" stroke-width="1" fill="none"/><rect x="571.5" y="636.5" width="127" height="164" fill="none" stroke="#b8b8b8" stroke-width="1"/><text x="625.3" y="629.1" font-size="7.8" text-anchor="middle" fill="#111" font-weight="700">Time = 16 h</text><text x="566" y="802" font-size="5.2" text-anchor="end" fill="#555">40</text><text x="566" y="769.2" font-size="5.2" text-anchor="end" fill="#555">60</text><text x="566" y="736.4" font-size="5.2" text-anchor="end" fill="#555">80</text><text x="566" y="703.6" font-size="5.2" text-anchor="end" fill="#555">100</text><text x="566" y="670.8" font-size="5.2" text-anchor="end" fill="#555">120</text><text x="566" y="638" font-size="5.2" text-anchor="end" fill="#555">140</text><text x="595.44" y="811.6" font-size="5.3" text-anchor="middle" fill="#555">500</text><text x="621.08" y="811.6" font-size="5.3" text-anchor="middle" fill="#555">1000</text><text x="646.72" y="811.6" font-size="5.3" text-anchor="middle" fill="#555">1500</text><text x="672.36" y="811.6" font-size="5.3" text-anchor="middle" fill="#555">2000</text><text x="698" y="811.6" font-size="5.3" text-anchor="middle" fill="#555">2500</text><text x="634.7" y="824.1" font-size="5.4" text-anchor="middle" fill="#555">Distance [ft]</text><text x="550" y="717.7" font-size="5.5" text-anchor="middle" fill="#555" transform="rotate(-90 550 717.7)">Temperature [°F]</text><text x="648.7" y="794.7" font-size="11.2" font-weight="700" fill="#a6a6a6" textLength="35.8" lengthAdjust="spacingAndGlyphs">flotools</text><path d="M687.3 785.35h1.1v1.1h-1.1zM688.9 785.35h1.1v1.1h-1.1zM687.3 786.9h1.1v1.1h-1.1zM688.9 786.9h1.1v1.1h-1.1zM690.5 786.9h1.1v1.1h-1.1zM687.3 788.45h1.1v1.1h-1.1zM688.9 788.45h1.1v1.1h-1.1zM690.5 788.45h1.1v1.1h-1.1zM692.1 788.45h1.1v1.1h-1.1zM693.7 788.45h1.1v1.1h-1.1zM687.3 790h1.1v1.1h-1.1zM688.9 790h1.1v1.1h-1.1zM690.5 790h1.1v1.1h-1.1zM692.1 790h1.1v1.1h-1.1zM693.7 790h1.1v1.1h-1.1zM695.3 790h1.1v1.1h-1.1zM687.3 791.55h1.1v1.1h-1.1zM688.9 791.55h1.1v1.1h-1.1zM690.5 791.55h1.1v1.1h-1.1zM692.1 791.55h1.1v1.1h-1.1zM693.7 791.55h1.1v1.1h-1.1zM695.3 791.55h1.1v1.1h-1.1zM696.9 791.55h1.1v1.1h-1.1zM687.3 793.1h1.1v1.1h-1.1zM688.9 793.1h1.1v1.1h-1.1zM690.5 793.1h1.1v1.1h-1.1zM692.1 793.1h1.1v1.1h-1.1zM693.7 793.1h1.1v1.1h-1.1zM695.3 793.1h1.1v1.1h-1.1zM687.3 794.65h1.1v1.1h-1.1zM688.9 794.65h1.1v1.1h-1.1zM690.5 794.65h1.1v1.1h-1.1zM692.1 794.65h1.1v1.1h-1.1zM693.7 794.65h1.1v1.1h-1.1zM687.3 796.2h1.1v1.1h-1.1zM688.9 796.2h1.1v1.1h-1.1zM690.5 796.2h1.1v1.1h-1.1zM687.3 797.75h1.1v1.1h-1.1zM688.9 797.75h1.1v1.1h-1.1z" fill="#c6c6c6"/><rect x="697" y="623.5" width="12.5" height="12" fill="#fff" stroke="#333" stroke-width="1"/>
</svg>
<div id="panel"></div>
<div class="abs" style="left:865px;top:72px;font-size:19.9px;line-height:24px;color:#555;white-space:nowrap">Export options</div>
<div class="h2" style="top:117px">Export As</div><div class="hr" style="top:134px"></div>
<div class="btn sel" style="left:880px;top:150px;width:112px">Image</div>
<div class="btn" style="left:1002px;top:150px;width:113px">Video</div>
<div class="btn" style="left:880px;top:188px;width:112px;font-size:11.2px">Data (Excel)</div>
<div class="btn" style="left:1002px;top:188px;width:113px;font-size:11.2px">Data (CSV)</div>
<div class="h2" style="top:243px">Mode</div><div class="help" style="left:903px;top:245px">?</div><div class="hr" style="top:259px"></div>
<div class="btn sel" style="left:880px;top:275px;width:112px">Document</div>
<div class="btn" style="left:1002px;top:275px;width:113px">Presentation</div>
<div class="h2" style="top:330px">Image options</div><div class="help" style="left:950px;top:332px">?</div><div class="hr" style="top:346px"></div>
<div class="lab" style="top:361px">Quality</div><div class="val" style="top:361px">Draft<svg style="position:relative;display:inline-block;margin-left:6.5px;top:0.5px" width="10" height="7" viewBox="0 0 10 7"><path d="M1 1.2l4 4.2 4-4.2" fill="none" stroke="#5ba7cb" stroke-width="1.9"/></svg></div>
<div class="lab" style="top:391px">Size</div><div class="val" style="top:391px">Calculated<svg style="position:relative;display:inline-block;margin-left:6.5px;top:0.5px" width="10" height="7" viewBox="0 0 10 7"><path d="M1 1.2l4 4.2 4-4.2" fill="none" stroke="#5ba7cb" stroke-width="1.9"/></svg></div>
<div class="lab" style="top:421px">Plot layout</div><div class="val" style="top:421px">Two per page (stacked)<svg style="position:relative;display:inline-block;margin-left:6.5px;top:0.5px" width="10" height="7" viewBox="0 0 10 7"><path d="M1 1.2l4 4.2 4-4.2" fill="none" stroke="#5ba7cb" stroke-width="1.9"/></svg></div>
<div class="lab" style="top:451px">Page size</div><div class="val" style="top:451px">Letter, Portrait<svg style="position:relative;display:inline-block;margin-left:6.5px;top:0.5px" width="10" height="7" viewBox="0 0 10 7"><path d="M1 1.2l4 4.2 4-4.2" fill="none" stroke="#5ba7cb" stroke-width="1.9"/></svg></div>
<div class="lab" style="top:481px">Page margins</div><div class="val" style="top:481px">Normal (1")<svg style="position:relative;display:inline-block;margin-left:6.5px;top:0.5px" width="10" height="7" viewBox="0 0 10 7"><path d="M1 1.2l4 4.2 4-4.2" fill="none" stroke="#5ba7cb" stroke-width="1.9"/></svg></div>
<div class="lab" style="top:511px">Caption size</div><div class="val" style="top:511px">Small (0.5")<svg style="position:relative;display:inline-block;margin-left:6.5px;top:0.5px" width="10" height="7" viewBox="0 0 10 7"><path d="M1 1.2l4 4.2 4-4.2" fill="none" stroke="#5ba7cb" stroke-width="1.9"/></svg></div>
<div class="lab" style="top:539px">Calculated size</div><div class="val" style="top:539px">6.5" x 4"</div>
<div class="abs lnk" style="left:1036px;top:389px;font-size:12.2px;line-height:14px;white-space:nowrap">Apply to all</div>
<div class="abs lnk" style="left:1106px;top:389px;font-size:12.2px;line-height:14px;white-space:nowrap;width:11px;overflow:hidden">Save</div>
<div class="abs" style="left:1122px;top:347px;width:8px;height:218px;background:#c9c9c9"></div>
<div class="abs" style="left:953px;top:563px;width:122px;height:72px;border:1px solid #a0a0a0;border-bottom:none;background:#fff"></div>
<div class="abs" style="left:968px;top:564px;width:0;height:70px;border-left:1px dashed #dadada"></div>
<div class="abs" style="left:1060px;top:564px;width:0;height:70px;border-left:1px dashed #dadada"></div>
<div class="abs" style="left:954px;top:577.6px;width:120px;height:0;border-top:1px dashed #dadada"></div>
<div class="abs" style="left:970px;top:580px;width:89px;height:55px;border:1px solid #a0a0a0;border-bottom:none;background:#f3f3f3"></div>
<div class="abs" style="left:865px;top:634px;width:237px;height:8px;background:#c9c9c9"></div>
<div class="hr" style="top:642px"></div>
<div class="abs" style="left:865px;top:655px;font-weight:700;font-size:11.6px;line-height:14px;color:#111;white-space:nowrap">2 plots selected</div>
<div class="abs" style="left:865px;top:684px;width:84px;height:30px;background:#52aae0;border:1px solid #4a9fd6;border-bottom-color:#3f8fc6;border-radius:3px;color:#fff;text-align:center;line-height:31.5px;font-size:11.9px">Export</div>
<div class="abs" style="left:969px;top:684px;width:145px;height:30px;background:#a1d0ee;border:1px solid #98c9ea;border-radius:3px;color:#fff;text-align:center;line-height:31.5px;font-size:12.1px">Copy to clipboard</div>
<div id="status"><div class="abs" style="left:8px;top:0">Ready</div>
<div class="abs" style="left:784px;top:0;width:38px;height:21px;background:#dadada"></div>
<svg width="1140" height="22" viewBox="0 734 1140 22"><path d="M799.5 740.5h4l2.5 2.5v7.5h-6.5z" fill="#fff" stroke="#808080" stroke-width="1"/><path d="M803.5 740.5v2.5h2.5" fill="none" stroke="#808080" stroke-width="1"/><rect x="835.5" y="741" width="11" height="7" fill="#777"/><rect x="836.8" y="742.2" width="8.4" height="4.6" fill="#f0f0f0"/><rect x="840" y="748" width="2" height="2" fill="#777"/><rect x="838" y="750" width="6" height="1.2" fill="#777"/><rect x="890" y="745" width="75" height="1" fill="#b8b8b8"/><rect x="939.4" y="739" width="3.4" height="13" fill="#858585"/></svg>
<div class="abs" style="left:977px;top:0;color:#777;font-size:9.2px">210%</div>
<div class="abs" style="left:1046.4px;top:0;white-space:nowrap;font-size:10.55px">All changes saved</div>
</div>
</div>
</body></html>
